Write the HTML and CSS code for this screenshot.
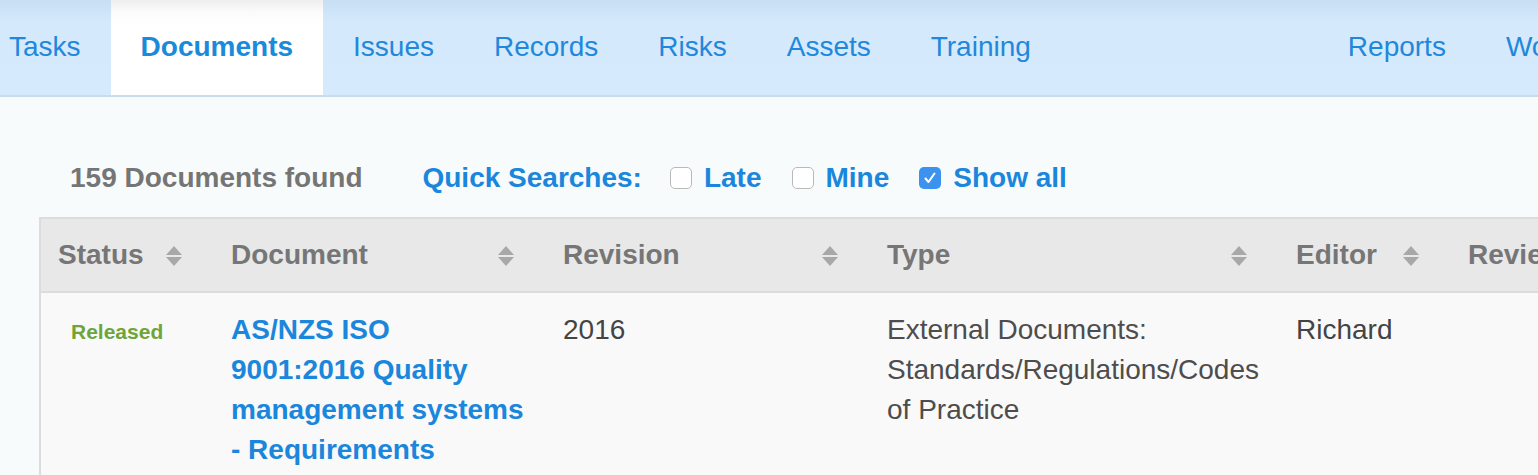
FILE: index.html
```html
<!DOCTYPE html>
<html lang="en">
<head>
<meta charset="utf-8">
<title>Documents</title>
<link rel="stylesheet" href="styles.css">
</head>
<body>
<nav class="topnav">
  <ul class="tabs">
    <li class="tab first"><a href="#">Tasks</a></li>
    <li class="tab active"><a href="#">Documents</a></li>
    <li class="tab"><a href="#">Issues</a></li>
    <li class="tab"><a href="#">Records</a></li>
    <li class="tab"><a href="#">Risks</a></li>
    <li class="tab"><a href="#">Assets</a></li>
    <li class="tab"><a href="#">Training</a></li>
  </ul>
  <ul class="tabs right">
    <li class="tab"><a href="#">Reports</a></li>
    <li class="tab"><a href="#">Workflows</a></li>
  </ul>
</nav>

<main class="content">
  <div class="toolbar">
    <span class="count">159 Documents found</span>
    <span class="qs-label">Quick Searches:</span>
    <label class="qs"><span class="box"></span>Late</label>
    <label class="qs"><span class="box"></span>Mine</label>
    <label class="qs"><span class="box checked"><svg width="22" height="22" viewBox="0 0 22 22"><path d="M6.5 11.5 L9.5 15 L15.5 6.5" fill="none" stroke="#fff" stroke-width="2" stroke-linecap="round" stroke-linejoin="round"/></svg></span>Show all</label>
  </div>

  <table class="grid">
    <colgroup>
      <col class="c-status">
      <col class="c-doc">
      <col class="c-rev">
      <col class="c-type">
      <col class="c-editor">
      <col class="c-review">
    </colgroup>
    <thead>
      <tr>
        <th>Status<span class="sort"></span></th>
        <th>Document<span class="sort"></span></th>
        <th>Revision<span class="sort"></span></th>
        <th>Type<span class="sort"></span></th>
        <th>Editor<span class="sort"></span></th>
        <th>Review Date<span class="sort"></span></th>
      </tr>
    </thead>
    <tbody>
      <tr>
        <td><span class="status">Released</span></td>
        <td><a class="doc" href="#">AS/NZS ISO 9001:2016 Quality management systems - Requirements</a></td>
        <td>2016</td>
        <td class="type">External Documents: Standards/Regulations/Codes of Practice</td>
        <td>Richard</td>
        <td></td>
      </tr>
    </tbody>
  </table>
</main>
</body>
</html>
```

FILE: styles.css
```css
html, body {
  margin: 0;
  padding: 0;
}
body {
  background: #f7fbfb;
  font-family: "Liberation Sans", Arial, Helvetica, sans-serif;
  overflow: hidden;
  width: 1538px;
  height: 475px;
}

.topnav {
  display: flex;
  height: 95px;
  background: linear-gradient(#c7def4 0, #d4e9fb 22px, #d5eafc 100%);
  border-bottom: 2px dotted #cbd9e3;
  white-space: nowrap;
}
.tabs {
  display: flex;
  list-style: none;
  margin: 0;
  padding: 0;
}
.tabs.right {
  margin-left: 257px;
}
.tab a {
  display: block;
  padding: 0 30px;
  line-height: 93px;
  font-size: 28px;
  color: #1f88dc;
  text-decoration: none;
}
.tab.first {
  margin-left: -21px;
}
.tab.active {
  background: linear-gradient(#eeeeee 0, #fbfbfb 12px, #ffffff 24px);
}
.tab.active a {
  font-weight: bold;
  color: #1a8adb;
}

.content {
  padding: 61px 0 0 39px;
}
.toolbar {
  display: flex;
  align-items: center;
  height: 40px;
  padding-left: 31px;
  font-size: 28px;
  font-weight: bold;
  white-space: nowrap;
}
.count {
  color: #757575;
  margin-right: 60px;
}
.qs-label {
  color: #1a86dc;
  margin-right: 28px;
}
.qs {
  display: flex;
  align-items: center;
  color: #1a86dc;
  margin-right: 30px;
}
.box {
  display: block;
  flex: none;
  box-sizing: border-box;
  width: 22px;
  height: 22px;
  margin-right: 12px;
  border: 1px solid #b9b9b9;
  border-radius: 5px;
  background: #ffffff;
}
.box.checked {
  border: none;
  background: #3c92ef;
}
.box svg {
  display: block;
}

.grid {
  margin-top: 19px;
  border-collapse: separate;
  border-spacing: 0;
  table-layout: fixed;
  width: 1660px;
  border-left: 2px solid #dcdcdc;
  border-top: 2px solid #dcdcdc;
  font-size: 28px;
}
.c-status { width: 172px; }
.c-doc { width: 332px; }
.c-rev { width: 324px; }
.c-type { width: 409px; }
.c-editor { width: 172px; }
.c-review { width: 251px; }

.grid th {
  position: relative;
  height: 72px;
  padding: 0 50px 0 18px;
  text-align: left;
  vertical-align: middle;
  font-weight: bold;
  color: #767676;
  background: #e8e8e9;
  border-bottom: 2px solid #dcdcdc;
  white-space: nowrap;
  overflow: hidden;
}
.grid th:first-child {
  padding-left: 17px;
}
.sort {
  position: absolute;
  right: 31px;
  top: 27px;
  width: 16px;
  height: 20px;
}
.sort::before,
.sort::after {
  content: "";
  position: absolute;
  left: 0;
  border-left: 8px solid transparent;
  border-right: 8px solid transparent;
}
.sort::before {
  top: 0;
  border-bottom: 9px solid #a8a8a8;
}
.sort::after {
  bottom: 0;
  border-top: 9px solid #a8a8a8;
}

.grid td {
  padding: 17px 18px 16px 18px;
  vertical-align: baseline;
  line-height: 40px;
  color: #444444;
  background: #f9f9f9;
}
.grid td.type {
  padding-right: 10px;
  color: #4d4d4d;
}
.status {
  display: inline-block;
  margin-left: 12px;
  font-size: 21px;
  font-weight: bold;
  color: #6ea53a;
}
.doc {
  font-weight: bold;
  color: #1a86dc;
  text-decoration: none;
}
```
